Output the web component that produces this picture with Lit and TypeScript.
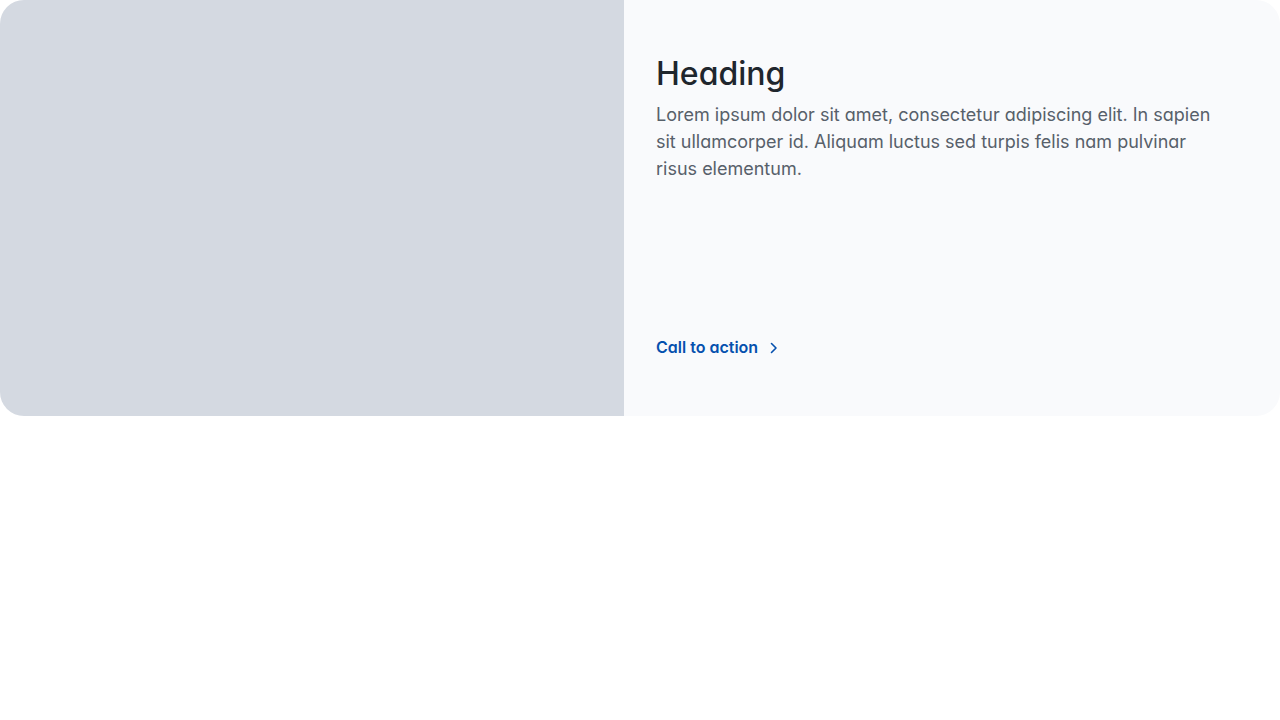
import { LitElement, html, css } from "lit";
import { customElement } from "lit/decorators.js";

@customElement("app-root")
export class AppRoot extends LitElement {
  static styles = css`
    :host {
      display: block;
      font-family: Inter, "Open Sans", sans-serif;
      font-feature-settings: "cv11";
    }
    .river {
      display: grid;
      grid-template-columns: 1fr 1fr;
      column-gap: 32px;
      overflow: hidden;
      border-radius: 24px;
      background: #f9fafc;
    }
    .visual {
      aspect-ratio: 3 / 2;
      background: #d4d9e1;
    }
    .content {
      display: flex;
      flex-direction: column;
      align-items: flex-start;
      justify-content: space-between;
      padding: 52px 64px 57px 0;
    }
    .heading {
      margin: 0 0 6px;
      font-size: 32px;
      font-weight: 500;
      line-height: 43px;
      color: #1f262d;
    }
    .text {
      margin: 0;
      font-size: 18px;
      font-weight: 400;
      line-height: 27px;
      color: #57606a;
    }
    .action {
      display: flex;
      align-items: center;
      gap: 11px;
      font-size: 16px;
      font-weight: 600;
      line-height: 24px;
      color: #0550ae;
      text-decoration: none;
    }
    .chevron {
      display: block;
      margin-top: 2px;
    }
  `;

  render() {
    return html`
      <section class="river">
        <div class="visual"></div>
        <div class="content">
          <div>
            <h3 class="heading">Heading</h3>
            <p class="text">
              Lorem ipsum dolor sit amet, consectetur adipiscing elit. In sapien
              sit ullamcorper id. Aliquam luctus sed turpis felis nam pulvinar
              risus elementum.
            </p>
          </div>
          <a class="action" href="#">
            Call to action
            <svg class="chevron" width="10" height="12" viewBox="0 0 10 12" fill="none" aria-hidden="true">
              <path d="M2.5 1.5 7 6 2.5 10.5" stroke="currentColor" stroke-width="1.6" stroke-linecap="round" stroke-linejoin="round" />
            </svg>
          </a>
        </div>
      </section>
    `;
  }
}
